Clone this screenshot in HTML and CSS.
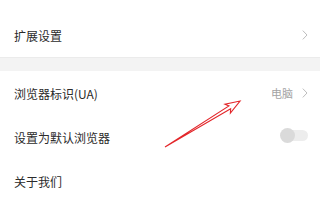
FILE: index.html
```html
<!DOCTYPE html>
<html lang="zh-CN">
<head>
<meta charset="utf-8">
<title>设置</title>
<link rel="stylesheet" href="styles.css">
</head>
<body>
<div class="page">
  <div class="group first">
    <div class="row">
      <span class="label">扩展设置</span>
      <span class="end">
        <svg class="chev" viewBox="0 0 6 10" width="6" height="10"><path d="M0.8 0.6 L5 5 L0.8 9.4" fill="none" stroke="#bdbdbd" stroke-width="1"/></svg>
      </span>
    </div>
  </div>
  <div class="band"></div>
  <div class="group">
    <div class="row">
      <span class="label">浏览器标识(UA)</span>
      <span class="end">
        <span class="value">电脑</span>
        <svg class="chev" viewBox="0 0 6 10" width="6" height="10"><path d="M0.8 0.6 L5 5 L0.8 9.4" fill="none" stroke="#bdbdbd" stroke-width="1"/></svg>
      </span>
    </div>
    <div class="row">
      <span class="label">设置为默认浏览器</span>
      <span class="end">
        <span class="toggle"><span class="knob"></span></span>
      </span>
    </div>
    <div class="row">
      <span class="label">关于我们</span>
    </div>
  </div>
  <svg class="arrow" width="320" height="209" viewBox="0 0 320 209">
    <g transform="translate(165 147) rotate(-31.5)">
      <polygon points="0,0 76,-1.6 73.5,-5.2 88,0 73.5,5.2 76,1.6" fill="#fff" stroke="#e3262a" stroke-width="1.1" stroke-linejoin="miter"/>
    </g>
  </svg>
</div>
</body>
</html>
```
FILE: styles.css
```css
html, body {
  margin: 0;
  padding: 0;
  background: #ffffff;
}
body {
  font-family: "Noto Sans CJK SC", "Noto Sans", sans-serif;
  color: #2b2b2b;
  width: 320px;
  height: 209px;
  overflow: hidden;
}
.page {
  position: relative;
  width: 320px;
  height: 209px;
}
.group.first {
  padding-top: 13px;
}
.row {
  height: 44px;
  display: flex;
  align-items: center;
  justify-content: space-between;
  padding: 0 12px 0 14px;
}
.label {
  font-size: 12px;
  line-height: 16px;
  padding-top: 1px;
  color: #2b2b2b;
}
.end {
  display: flex;
  align-items: center;
  gap: 9px;
}
.value {
  font-size: 11px;
  line-height: 14px;
  color: #a3a3a3;
}
.chev {
  display: block;
}
.band {
  height: 13px;
  background: #f3f3f3;
  border-top: 1px solid #ebebeb;
}
.toggle {
  position: relative;
  display: block;
  width: 28px;
  height: 15px;
  margin-top: -3px;
}
.toggle::before {
  content: "";
  position: absolute;
  left: 2px;
  right: 0;
  top: 2px;
  height: 11px;
  border-radius: 6px;
  background: #ededed;
}
.knob {
  position: absolute;
  left: 0;
  top: 0;
  width: 15px;
  height: 15px;
  border-radius: 50%;
  background: #dadada;
}
.arrow {
  position: absolute;
  left: 0;
  top: 0;
  pointer-events: none;
}
```
